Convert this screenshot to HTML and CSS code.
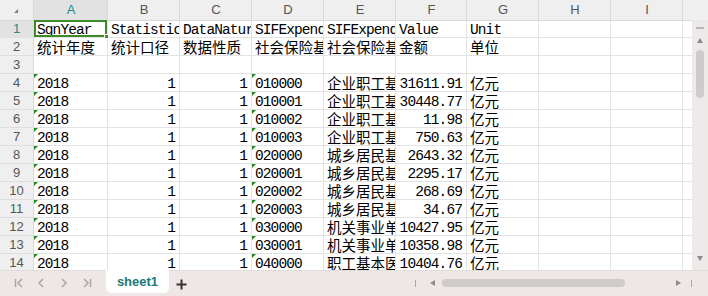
FILE: index.html
```html
<!DOCTYPE html>
<html lang="zh">
<head>
<meta charset="utf-8">
<link rel="stylesheet" href="styles.css">
</head>
<body>
<div class="app">
  <div class="main">
    <div class="colhead">
      <div class="h corner"><span class="corner-tri"></span></div>
      <div class="h sel">A</div>
      <div class="h">B</div>
      <div class="h">C</div>
      <div class="h">D</div>
      <div class="h">E</div>
      <div class="h">F</div>
      <div class="h">G</div>
      <div class="h">H</div>
      <div class="h">I</div>
      <div class="h hj"></div>
      <div class="h hfill"></div>
    </div>
    <div class="body">
      <div class="sheet">
        <div class="r sel">1</div>
        <div class="c a1">SgnYear<span class="selbox"><span class="handle"></span></span></div>
        <div class="c">Statistic</div>
        <div class="c">DataNature</div>
        <div class="c">SIFExpend</div>
        <div class="c">SIFExpend</div>
        <div class="c">Value</div>
        <div class="c">Unit</div>
        <div class="c"></div><div class="c"></div><div class="c"></div>

        <div class="r">2</div>
        <div class="c cjk">统计年度</div>
        <div class="c cjk">统计口径</div>
        <div class="c cjk">数据性质</div>
        <div class="c cjk">社会保险基</div>
        <div class="c cjk">社会保险基</div>
        <div class="c cjk">金额</div>
        <div class="c cjk">单位</div>
        <div class="c"></div><div class="c"></div><div class="c"></div>

        <div class="r">3</div>
        <div class="c"></div><div class="c"></div><div class="c"></div><div class="c"></div><div class="c"></div><div class="c"></div><div class="c"></div><div class="c"></div><div class="c"></div><div class="c"></div>

        <div class="r">4</div>
        <div class="c t">2018</div><div class="c n">1</div><div class="c n">1</div><div class="c t">010000</div><div class="c cjk">企业职工基</div><div class="c n">31611.91</div><div class="c cjk">亿元</div><div class="c"></div><div class="c"></div><div class="c"></div>

        <div class="r">5</div>
        <div class="c t">2018</div><div class="c n">1</div><div class="c n">1</div><div class="c t">010001</div><div class="c cjk">企业职工基</div><div class="c n">30448.77</div><div class="c cjk">亿元</div><div class="c"></div><div class="c"></div><div class="c"></div>

        <div class="r">6</div>
        <div class="c t">2018</div><div class="c n">1</div><div class="c n">1</div><div class="c t">010002</div><div class="c cjk">企业职工基</div><div class="c n">11.98</div><div class="c cjk">亿元</div><div class="c"></div><div class="c"></div><div class="c"></div>

        <div class="r">7</div>
        <div class="c t">2018</div><div class="c n">1</div><div class="c n">1</div><div class="c t">010003</div><div class="c cjk">企业职工基</div><div class="c n">750.63</div><div class="c cjk">亿元</div><div class="c"></div><div class="c"></div><div class="c"></div>

        <div class="r">8</div>
        <div class="c t">2018</div><div class="c n">1</div><div class="c n">1</div><div class="c t">020000</div><div class="c cjk">城乡居民基</div><div class="c n">2643.32</div><div class="c cjk">亿元</div><div class="c"></div><div class="c"></div><div class="c"></div>

        <div class="r">9</div>
        <div class="c t">2018</div><div class="c n">1</div><div class="c n">1</div><div class="c t">020001</div><div class="c cjk">城乡居民基</div><div class="c n">2295.17</div><div class="c cjk">亿元</div><div class="c"></div><div class="c"></div><div class="c"></div>

        <div class="r">10</div>
        <div class="c t">2018</div><div class="c n">1</div><div class="c n">1</div><div class="c t">020002</div><div class="c cjk">城乡居民基</div><div class="c n">268.69</div><div class="c cjk">亿元</div><div class="c"></div><div class="c"></div><div class="c"></div>

        <div class="r">11</div>
        <div class="c t">2018</div><div class="c n">1</div><div class="c n">1</div><div class="c t">020003</div><div class="c cjk">城乡居民基</div><div class="c n">34.67</div><div class="c cjk">亿元</div><div class="c"></div><div class="c"></div><div class="c"></div>

        <div class="r">12</div>
        <div class="c t">2018</div><div class="c n">1</div><div class="c n">1</div><div class="c t">030000</div><div class="c cjk">机关事业单</div><div class="c n">10427.95</div><div class="c cjk">亿元</div><div class="c"></div><div class="c"></div><div class="c"></div>

        <div class="r">13</div>
        <div class="c t">2018</div><div class="c n">1</div><div class="c n">1</div><div class="c t">030001</div><div class="c cjk">机关事业单</div><div class="c n">10358.98</div><div class="c cjk">亿元</div><div class="c"></div><div class="c"></div><div class="c"></div>

        <div class="r">14</div>
        <div class="c t">2018</div><div class="c n">1</div><div class="c n">1</div><div class="c t">040000</div><div class="c cjk">职工基本医</div><div class="c n">10404.76</div><div class="c cjk">亿元</div><div class="c"></div><div class="c"></div><div class="c"></div>
      </div>
      <div class="vscroll">
        <span class="vdash"></span>
        <span class="tri-up"></span>
        <span class="vthumb"></span>
        <span class="vspace"></span>
        <span class="tri-down"></span>
      </div>
    </div>
  </div>
  <div class="tabbar">
    <div class="nav">
      <svg class="navic" width="12" height="10" viewBox="0 0 12 10"><path d="M1.5 1v8M8 1L4 5l4 4" fill="none" stroke="#a9a6a5" stroke-width="1.5"/></svg>
      <svg class="navic" width="8" height="10" viewBox="0 0 8 10"><path d="M6 1L2 5l4 4" fill="none" stroke="#a9a6a5" stroke-width="1.5"/></svg>
      <svg class="navic" width="8" height="10" viewBox="0 0 8 10"><path d="M2 1l4 4-4 4" fill="none" stroke="#a9a6a5" stroke-width="1.5"/></svg>
      <svg class="navic" width="12" height="10" viewBox="0 0 12 10"><path d="M4 1l4 4-4 4M10.5 1v8" fill="none" stroke="#a9a6a5" stroke-width="1.5"/></svg>
    </div>
    <div class="tab">sheet1</div>
    <svg class="plus" width="11" height="11" viewBox="0 0 11 11"><path d="M5.5 0.5v10M0.5 5.5h10" stroke="#333" stroke-width="2"/></svg>
    <div class="hscroll">
      <span class="sep"></span>
      <span class="tri-left"></span>
      <span class="hthumb"></span>
      <span class="tri-right"></span>
      <span class="sep"></span>
    </div>
  </div>
</div>
</body>
</html>
```

FILE: styles.css
```css
* { box-sizing: border-box; }
html, body { margin: 0; padding: 0; background: #fff; }
.app {
  width: 708px;
  height: 296px;
  display: flex;
  flex-direction: column;
  overflow: hidden;
  font-family: "Liberation Mono", monospace;
}
.main {
  height: 270px;
  display: flex;
  flex-direction: column;
}
.colhead {
  height: 20px;
  display: grid;
  grid-template-columns: 34px 74px 72px 72px 72px 72px 71px 72px 72px 72px 9px 1fr;
  background: #efefef;
}
.h {
  border-right: 1px solid #d9d9d9;
  border-bottom: 1px solid #d9d9d9;
  font-family: "Liberation Sans", "Noto Sans", sans-serif;
  font-size: 13px;
  color: #555;
  text-align: center;
  line-height: 20px;
  padding-left: 1px;
}
.h.sel { background: #e2e2e2; color: #1f8a83; }
.h.hj, .h.hfill { border-right: none; }
.corner { position: relative; }
.corner-tri {
  position: absolute;
  left: 14px;
  top: 9px;
  width: 0; height: 0;
  border-left: 4px solid transparent;
  border-bottom: 4px solid #7f7f7f;
}
.body {
  flex: 1;
  display: flex;
  overflow: hidden;
}
.sheet {
  width: 692px;
  display: grid;
  grid-template-columns: 34px 74px 72px 72px 72px 72px 71px 72px 72px 72px 9px;
  grid-auto-rows: 18px;
  align-content: start;
  overflow: hidden;
}
.r {
  background: #efefef;
  border-right: 1px solid #d9d9d9;
  border-bottom: 1px solid #dedede;
  font-family: "Liberation Sans", "Noto Sans", sans-serif;
  font-size: 13px;
  color: #555;
  text-align: center;
  line-height: 18px;
}
.r.sel { background: #e2e2e2; color: #1f8a83; }
.c {
  position: relative;
  border-right: 1px solid #e3e3e3;
  border-bottom: 1px solid #e3e3e3;
  font-size: 14.5px;
  letter-spacing: -0.9px;
  color: #000;
  white-space: nowrap;
  overflow: hidden;
  padding: 2px 3px 0 3px;
  line-height: 17px;
}
.c:nth-child(11n) { border-right: none; }
.c.n { text-align: right; padding-right: 4px; }
.c.t::before {
  content: "";
  position: absolute;
  left: 0; top: 0;
  width: 0; height: 0;
  border-top: 4px solid #1e8a1e;
  border-right: 4px solid transparent;
}
.c.cjk {
  font-family: "Noto Sans CJK SC", sans-serif;
  font-size: 14.5px;
  letter-spacing: 0;
  line-height: 17px;
  padding-top: 0;
}
.c.a1 { overflow: visible; }
.selbox {
  position: absolute;
  left: 0; top: 0;
  width: 73px; height: 17px;
  border: 2px solid #3f8a28;
}
.handle {
  position: absolute;
  right: -4px; bottom: -4px;
  width: 5px; height: 5px;
  background: #3f8a28;
  border: 1px solid #fff;
}
.vscroll {
  width: 16px;
  background: #ece9e8;
  display: flex;
  flex-direction: column;
  align-items: center;
  padding-top: 7px;
  padding-bottom: 9px;
}
.vdash { width: 8px; height: 2px; background: #b9b6b5; }
.tri-up {
  margin-top: 9px;
  width: 0; height: 0;
  border-left: 3.5px solid transparent;
  border-right: 3.5px solid transparent;
  border-bottom: 5px solid #8e8b8a;
}
.vthumb {
  margin-top: 7px;
  width: 8px; height: 48px;
  border-radius: 4px;
  background: #cfcbca;
}
.vspace { flex: 1; }
.tri-down {
  width: 0; height: 0;
  border-left: 3.5px solid transparent;
  border-right: 3.5px solid transparent;
  border-top: 5px solid #8e8b8a;
}
.tabbar {
  height: 26px;
  background: #eee7e5;
  border-top: 1px solid #e2dcda;
  display: flex;
  align-items: flex-start;
  font-family: "Liberation Sans", sans-serif;
}
.nav {
  display: flex;
  align-items: center;
  height: 24px;
  padding-left: 14px;
}
.navic { display: block; }
.navic:nth-child(1) { margin-right: 11px; }
.navic:nth-child(2) { margin-right: 15px; }
.navic:nth-child(3) { margin-right: 12px; }
.tab {
  margin-left: 14px;
  width: 63px;
  height: 23px;
  background: #fff;
  border-radius: 0 0 5px 5px;
  margin-top: -1px;
  color: #1b7a78;
  font-weight: bold;
  font-size: 13px;
  text-align: center;
  line-height: 23px;
}
.plus { display: block; margin: 8px 0 0 7px; }
.hscroll {
  display: flex;
  align-items: center;
  height: 24px;
  margin-left: 228px;
}
.sep { width: 1px; height: 7px; background: #aaa6a5; }
.tri-left {
  margin-left: 14px;
  width: 0; height: 0;
  border-top: 3px solid transparent;
  border-bottom: 3px solid transparent;
  border-right: 5px solid #8e8b8a;
}
.hthumb {
  margin-left: 7px;
  width: 183px; height: 8px;
  border-radius: 4px;
  background: #cfcbca;
}
.tri-right {
  margin-left: 51px;
  margin-right: 10px;
  width: 0; height: 0;
  border-top: 3px solid transparent;
  border-bottom: 3px solid transparent;
  border-left: 5px solid #8e8b8a;
}
```
